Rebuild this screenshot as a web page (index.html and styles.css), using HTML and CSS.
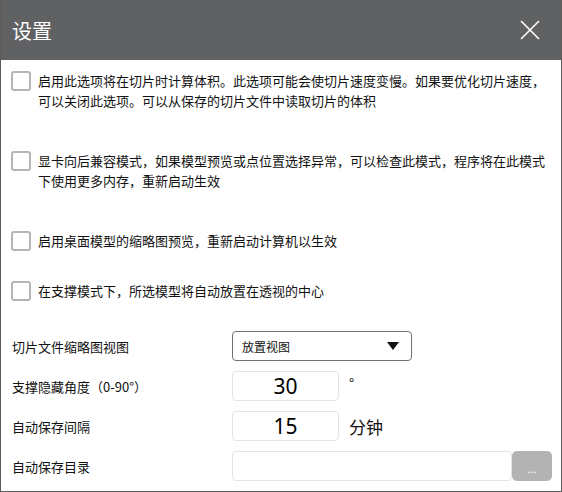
FILE: index.html
```html
<!DOCTYPE html>
<html lang="zh">
<head>
  <meta charset="UTF-8" />
  <title>设置</title>
  <link rel="stylesheet" href="styles.css">
</head>
<body>
  <div class="dialog">
    <!-- Title bar -->
    <div class="titlebar">
      <span class="title">设置</span>
      <svg class="close" width="20" height="20" viewBox="0 0 20 20">
        <path d="M1 1 L19 19 M19 1 L1 19" stroke="#fff" stroke-width="1.6" fill="none" />
      </svg>
    </div>

    <div class="content">
      <!-- Checkbox options -->
      <div class="option tall">
        <span class="check"></span>
        <span class="option-text">启用此选项将在切片时计算体积。此选项可能会使切片速度变慢。如果要优化切片速度，可以关闭此选项。可以从保存的切片文件中读取切片的体积</span>
      </div>
      <div class="option tall">
        <span class="check"></span>
        <span class="option-text">显卡向后兼容模式，如果模型预览或点位置选择异常，可以检查此模式，程序将在此模式下使用更多内存，重新启动生效</span>
      </div>
      <div class="option">
        <span class="check"></span>
        <span class="option-text">启用桌面模型的缩略图预览，重新启动计算机以生效</span>
      </div>
      <div class="option">
        <span class="check"></span>
        <span class="option-text">在支撑模式下，所选模型将自动放置在透视的中心</span>
      </div>

      <!-- Form rows -->
      <div class="form">
        <div class="row">
          <span class="label">切片文件缩略图视图</span>
          <div class="select">
            <span>放置视图</span>
            <span class="arrow"></span>
          </div>
        </div>
        <div class="row">
          <span class="label">支撑隐藏角度（0-90°）</span>
          <div class="num">30</div>
          <span class="unit deg">°</span>
        </div>
        <div class="row">
          <span class="label">自动保存间隔</span>
          <div class="num">15</div>
          <span class="unit">分钟</span>
        </div>
        <div class="row">
          <span class="label">自动保存目录</span>
          <div class="path"></div>
          <div class="browse">...</div>
        </div>
      </div>
    </div>
  </div>
</body>
</html>
```

FILE: styles.css
```css
html, body {
  margin: 0;
  padding: 0;
  background: #fff;
}
.dialog {
  width: 562px;
  height: 492px;
  box-sizing: border-box;
  border: 1px solid #5c5c5c;
  border-top: none;
  font-family: "Segoe UI", "Noto Sans", "Noto Sans CJK SC", sans-serif;
  color: #111;
  overflow: hidden;
}
/* Title bar */
.titlebar {
  height: 60px;
  margin: 0 -1px;
  background: #606163;
  display: flex;
  align-items: center;
  justify-content: space-between;
  padding: 0 22px 0 12px;
}
.title {
  color: #fff;
  font-size: 20px;
  font-family: "Noto Sans CJK SC", sans-serif;
  line-height: 20px;
  margin-top: 2px;
}
.close {
  display: block;
}
/* Content */
.content {
  padding: 11px 0 0 10px;
}
.option {
  display: flex;
  align-items: flex-start;
  height: 50px;
  font-family: "Noto Sans CJK SC", sans-serif;
  font-size: 13px;
  line-height: 20px;
}
.option.tall {
  height: 80px;
}
.check {
  flex: none;
  width: 16px;
  height: 16px;
  border: 2px solid #b5b5b5;
  border-radius: 3px;
  margin-right: 7px;
}
.option-text {
  width: 512px;
}
/* Form rows */
.form {
  display: flex;
  flex-direction: column;
  gap: 10px;
}
.row {
  display: flex;
  align-items: center;
  height: 30px;
}
.label {
  width: 220px;
  padding-left: 1px;
  font-size: 13px;
  font-family: "Noto Sans CJK SC", sans-serif;
}
.select {
  width: 180px;
  height: 30px;
  box-sizing: border-box;
  border: 1px solid #707070;
  border-radius: 4px;
  display: flex;
  align-items: center;
  justify-content: space-between;
  padding: 0 12px 0 9px;
  font-size: 12px;
  font-family: "Noto Sans CJK SC", sans-serif;
}
.arrow {
  width: 0;
  height: 0;
  border-left: 6px solid transparent;
  border-right: 6px solid transparent;
  border-top: 8px solid #111;
}
.num {
  width: 107px;
  height: 30px;
  box-sizing: border-box;
  border: 1px solid #e4e4e4;
  border-radius: 4px;
  text-align: center;
  line-height: 28px;
  font-size: 21px;
  color: #000;
}
.unit {
  margin-left: 10px;
  font-size: 17px;
  font-family: "Noto Sans CJK SC", sans-serif;
}
.unit.deg {
  font-size: 14px;
  align-self: flex-start;
  margin-top: 2px;
}
.path {
  width: 280px;
  height: 30px;
  box-sizing: border-box;
  border: 1px solid #e4e4e4;
  border-radius: 4px;
}
.browse {
  width: 40px;
  height: 30px;
  background: #b3b3b3;
  border-radius: 5px;
  color: #fff;
  font-size: 11px;
  text-align: center;
  line-height: 36px;
}
```
